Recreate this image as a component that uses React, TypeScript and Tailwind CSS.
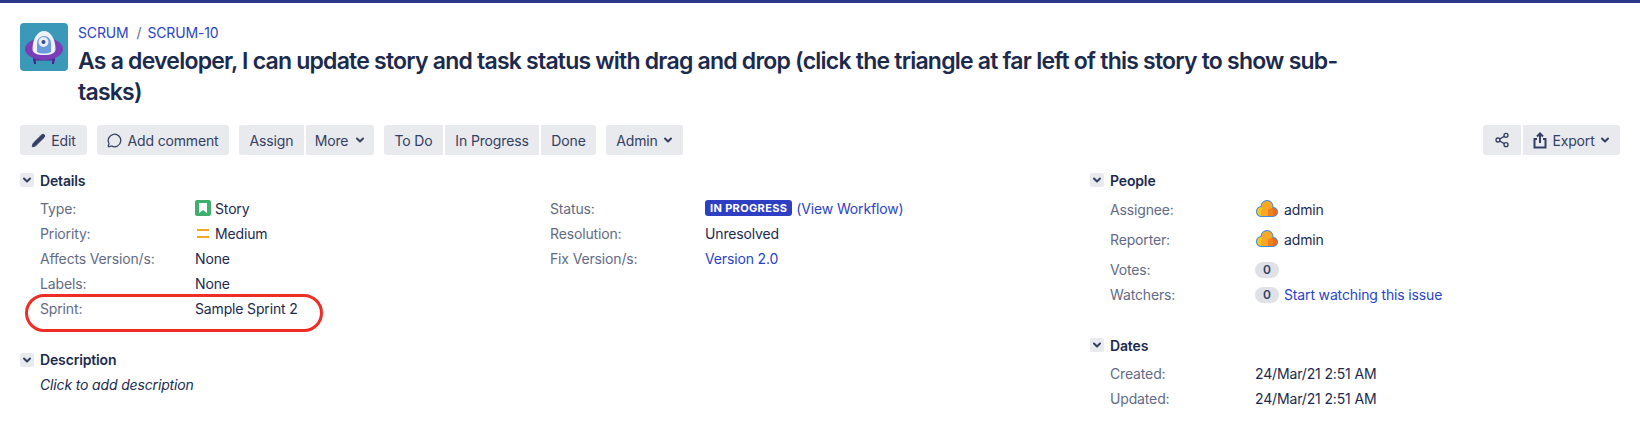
import React from 'react';
import { Pencil, MessageCircle, Share2 } from 'lucide-react';

const LINK = 'text-[#2a44c8]';

const Chevron: React.FC = () => (
  <svg width="10" height="10" viewBox="0 0 10 10" fill="none" className="shrink-0">
    <path d="M2 3.5 L5 6.5 L8 3.5" stroke="currentColor" strokeWidth="2" strokeLinecap="round" strokeLinejoin="round" />
  </svg>
);

const Btn: React.FC<{ className: string; children: React.ReactNode; round?: string }> = ({ className, children, round = 'rounded-[3px]' }) => (
  <div className={`h-[30px] bg-[#e9eaee] ${round} flex items-center justify-center text-[14px] tracking-[-0.15px] text-[#344063] ${className}`}>
    {children}
  </div>
);

const SectionHead: React.FC<{ title: string }> = ({ title }) => (
  <div className="flex items-center h-[14px] gap-[6px]">
    <div className="w-[14px] h-[14px] bg-[#e9eaee] rounded-[2px] flex items-center justify-center text-[#344063]">
      <Chevron />
    </div>
    <span className="text-[14px] font-semibold tracking-[-0.15px] text-[#1c2a4d]">{title}</span>
  </div>
);

const Row: React.FC<{ label: string; labelW: string; h?: string; children: React.ReactNode }> = ({ label, labelW, h = 'h-[25px]', children }) => (
  <div className={`flex items-center ${h} text-[14px] tracking-[-0.15px]`}>
    <div className={`${labelW} text-[#626b85] shrink-0`}>{label}</div>
    <div className="flex items-center text-[#1c2a4d]">{children}</div>
  </div>
);

const Logo: React.FC = () => (
  <svg width="48" height="48" viewBox="0 0 48 48" className="shrink-0">
    <rect width="48" height="48" rx="4" fill="#3a98b9" />
    <path d="M13 36 L14 41 H16 L16 36 Z M32 36 L32 41 H34 L35 36 Z" fill="#4b2a93" />
    <rect x="13" y="35" width="22" height="2.5" fill="#4b2a93" />
    <ellipse cx="24" cy="26" rx="19" ry="11" fill="#7b3db8" />
    <path d="M12.5 26 a11.5 18 0 0 1 23 0 c0 4-4 6-11.5 6 s-11.5-2-11.5-6 z" fill="#eef1f6" />
    <path d="M17 20 a7 7 0 0 1 14 0 V29 c-2 1-4 1.500-7 1.500 s-5-.5-7-1.500 z" fill="#6a9bdc" />
    <circle cx="23.500" cy="19" r="5" fill="#e8edf5" />
    <circle cx="23.500" cy="19" r="2" fill="#3b4a8c" />
  </svg>
);

const Cloud: React.FC = () => (
  <svg width="22" height="18" viewBox="0 0 22 18" className="shrink-0">
    <g fill="#3f8ad8">
      <circle cx="5.500" cy="11.500" r="5.500" />
      <circle cx="11" cy="6.500" r="6.500" />
      <circle cx="17" cy="12" r="5" />
      <rect x="5" y="11" width="12" height="6" />
    </g>
    <g>
      <circle cx="5.500" cy="11.500" r="4.500" fill="#f8c61c" />
      <circle cx="11" cy="6.500" r="5.500" fill="#f9a825" />
      <rect x="5" y="10" width="8" height="6" fill="#f9a825" />
      <circle cx="17" cy="12" r="4" fill="#ef6c1a" />
      <rect x="12" y="9" width="5" height="7" fill="#f0801e" />
    </g>
  </svg>
);

const Avatar: React.FC = () => (
  <span className="w-[24px] mr-[5px] flex items-center justify-center"><Cloud /></span>
);

const Badge: React.FC = () => (
  <span className="w-[24px] h-[16px] mr-[5px] rounded-full bg-[#dfe1e6] flex items-center justify-center text-[12px] font-semibold text-[#344063]">0</span>
);

export default function App() {
  return (
    <div className="w-[1640px] h-[422px] overflow-hidden bg-white font-['Inter',sans-serif] flex flex-col">
      <div className="h-[3px] bg-[#2b3889] shrink-0" />
      <div className="px-[20px] pt-[20px]">
        <div className="flex gap-[10px]">
          <Logo />
          <div className="w-[1270px]">
            <div className="flex items-center h-[20px] text-[14px] tracking-[-0.15px] -mt-[1px]">
              <span className={LINK}>SCRUM</span>
              <span className="ml-[8px] mr-[6px] text-[#626b85]">/</span>
              <span className={LINK}>SCRUM-10</span>
            </div>
            <h1 className="text-[23px] leading-[31px] font-semibold text-[#1c2a4d] mt-[4px] tracking-[-0.78px]">
              As a developer, I can update story and task status with drag and drop (click the triangle at far left of this story to show sub-tasks)
            </h1>
          </div>
        </div>

        <div className="flex justify-between mt-[17px]">
          <div className="flex">
            <Btn className="w-[67px] gap-[5px]"><Pencil size={15} fill="currentColor" strokeWidth={1.500} />Edit</Btn>
            <Btn className="w-[132px] gap-[5px] ml-[10px]"><MessageCircle size={15} strokeWidth={2} />Add comment</Btn>
            <Btn className="w-[65px] ml-[10px]" round="rounded-l-[3px]">Assign</Btn>
            <Btn className="w-[68px] ml-[2px] gap-[7px]" round="rounded-r-[3px]">More <Chevron /></Btn>
            <Btn className="w-[59px] ml-[10px]" round="rounded-l-[3px]">To Do</Btn>
            <Btn className="w-[94px] ml-[2px]" round="rounded-none">In Progress</Btn>
            <Btn className="w-[55px] ml-[2px]" round="rounded-r-[3px]">Done</Btn>
            <Btn className="w-[77px] ml-[10px] gap-[5px]">Admin <Chevron /></Btn>
          </div>
          <div className="flex">
            <Btn className="w-[38px]" round="rounded-l-[3px]"><Share2 size={16} strokeWidth={2} /></Btn>
            <Btn className="w-[97px] ml-[2px] gap-[5px]" round="rounded-r-[3px]">
              <svg width="14" height="17" viewBox="0 0 14 17" fill="none" stroke="currentColor" strokeWidth="2">
                <path d="M4 7 H1.500 V15.500 H12.500 V7 H10" />
                <path d="M7 11 V2 M4 4.500 L7 1.500 L10 4.500" />
              </svg>
              Export <Chevron />
            </Btn>
          </div>
        </div>

        <div className="flex mt-[18px]">
          <div className="w-[1070px] shrink-0">
            <SectionHead title="Details" />
            <div className="flex pl-[20px] mt-[8.500px]">
              <div className="w-[510px]">
                <Row label="Type:" labelW="w-[155px]">
                  <span className="w-[16px] h-[16px] mr-[4px] rounded-[2px] bg-[#3fae6f] flex items-center justify-center">
                    <svg width="8" height="10" viewBox="0 0 8 10"><path d="M0 0 H8 V10 L4 7 L0 10 Z" fill="#fff" /></svg>
                  </span>
                  Story
                </Row>
                <Row label="Priority:" labelW="w-[155px]">
                  <span className="w-[16px] mr-[4px] flex flex-col gap-[5px] items-center">
                    <span className="w-[12px] h-[2px] bg-[#f5a623]" />
                    <span className="w-[12px] h-[2px] bg-[#f5a623]" />
                  </span>
                  Medium
                </Row>
                <Row label="Affects Version/s:" labelW="w-[155px]">None</Row>
                <Row label="Labels:" labelW="w-[155px]">None</Row>
                <div className="relative">
                  <Row label="Sprint:" labelW="w-[155px]">Sample Sprint 2</Row>
                  <div className="absolute left-[-15px] top-[-2px] w-[298px] h-[38px] border-[3px] border-[#ee2e24] rounded-[19px]" />
                </div>
              </div>
              <div>
                <Row label="Status:" labelW="w-[155px]">
                  <span className="h-[16px] px-[5px] rounded-[3px] bg-[#2f3fc4] text-white text-[11px] font-bold flex items-center tracking-[0.35px]">IN PROGRESS</span>
                  <span className={`ml-[4px] ${LINK}`}>(View Workflow)</span>
                </Row>
                <Row label="Resolution:" labelW="w-[155px]">Unresolved</Row>
                <Row label="Fix Version/s:" labelW="w-[155px]"><span className={LINK}>Version 2.0</span></Row>
              </div>
            </div>
            <div className="mt-[32px]">
              <SectionHead title="Description" />
              <div className="pl-[20px] mt-[5.500px] h-[25px] flex items-center text-[14px] tracking-[-0.15px] italic text-[#1c2a4d]">Click to add description</div>
            </div>
          </div>

          <div>
            <SectionHead title="People" />
            <div className="pl-[20px] mt-[7px]">
              <Row label="Assignee:" labelW="w-[145px]" h="h-[30px]"><Avatar />admin</Row>
              <Row label="Reporter:" labelW="w-[145px]" h="h-[30px]"><Avatar />admin</Row>
              <div className="mt-[3px]">
                <Row label="Votes:" labelW="w-[145px]"><Badge /></Row>
              </div>
              <Row label="Watchers:" labelW="w-[145px]"><Badge /><span className={LINK}>Start watching this issue</span></Row>
            </div>
            <div className="mt-[31px]">
              <SectionHead title="Dates" />
              <div className="pl-[20px] mt-[8.500px]">
                <Row label="Created:" labelW="w-[145px]">24/Mar/21 2:51 AM</Row>
                <Row label="Updated:" labelW="w-[145px]">24/Mar/21 2:51 AM</Row>
              </div>
            </div>
          </div>
        </div>
      </div>
    </div>
  );
}
